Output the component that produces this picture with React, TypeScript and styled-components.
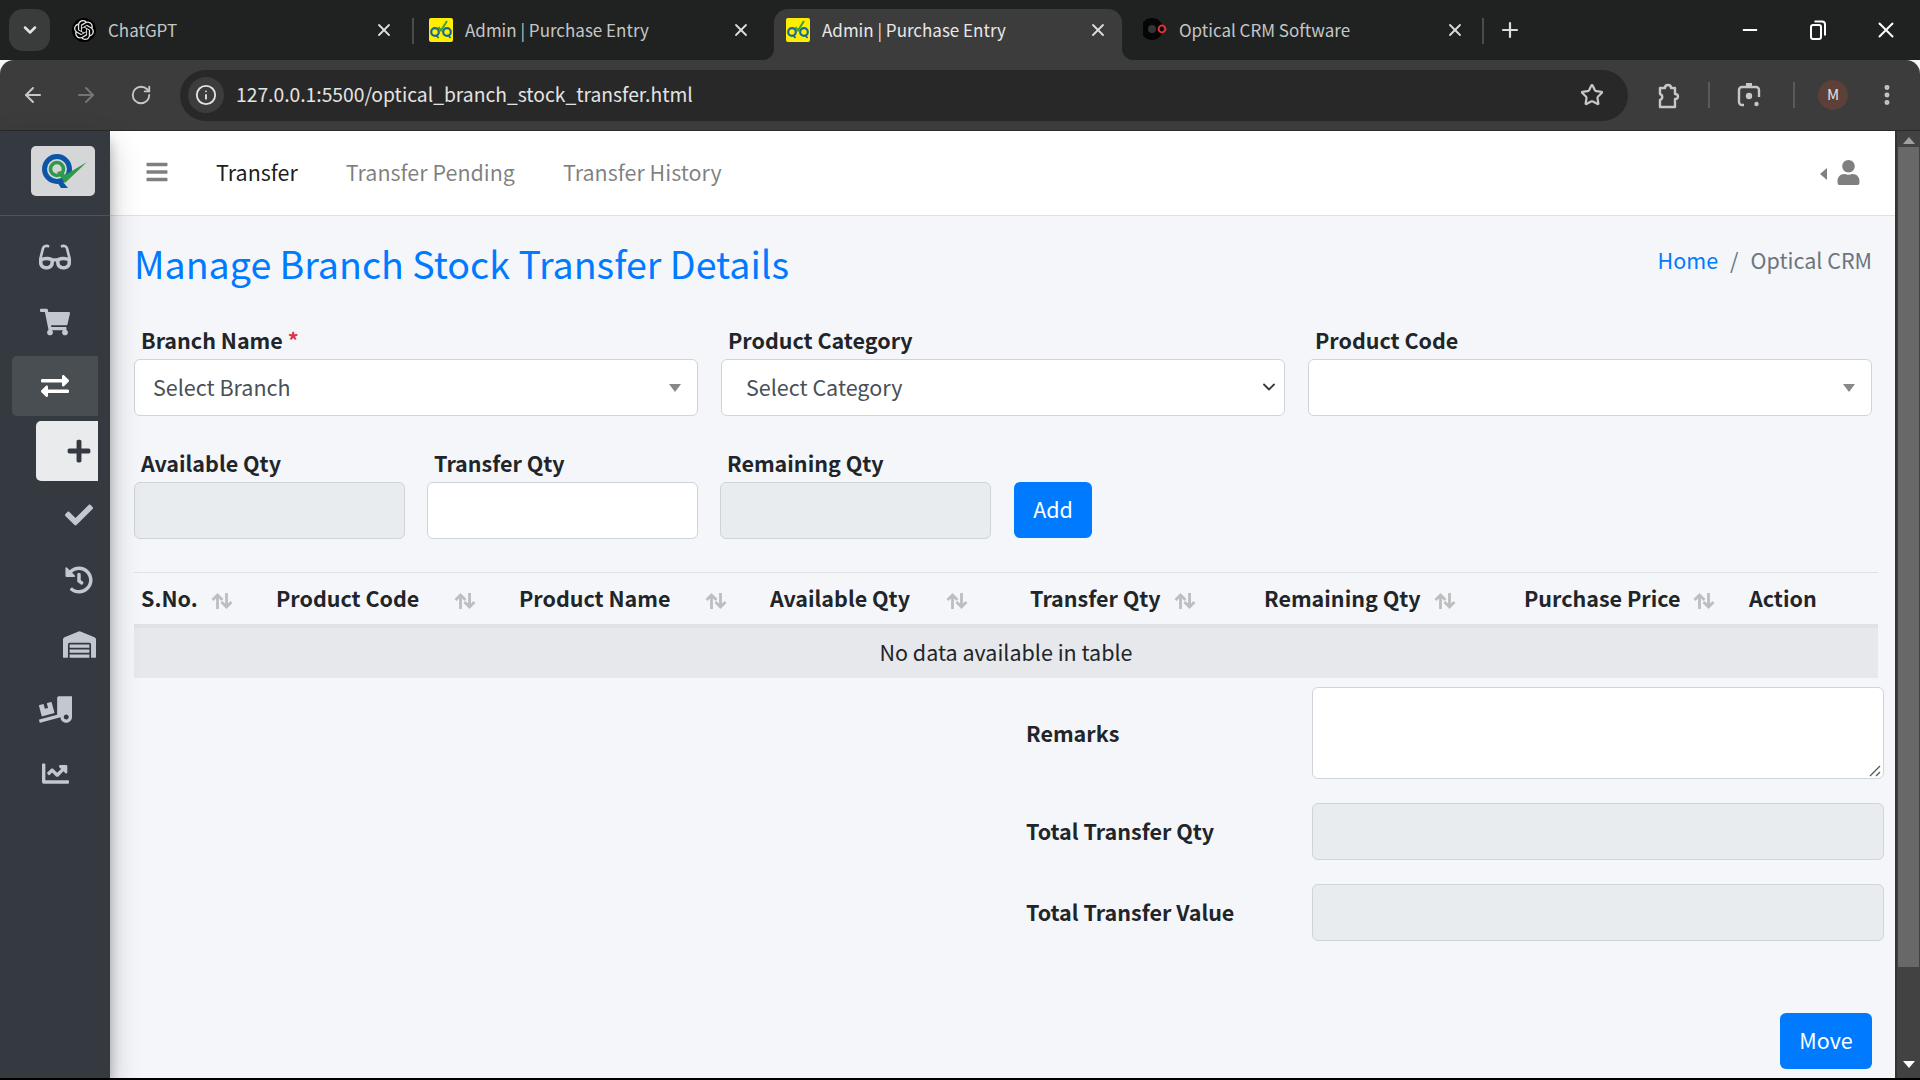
import React from "react";
import styled, { createGlobalStyle } from "styled-components";
import {
  FaGlasses, FaShoppingCart, FaExchangeAlt, FaPlus, FaCheck, FaHistory,
  FaWarehouse, FaTruckLoading, FaChartLine, FaBars, FaUser,
} from "react-icons/fa";
import { SiOpenai } from "react-icons/si";
import { LuChevronDown, LuArrowLeft, LuArrowRight, LuRotateCw, LuInfo, LuStar, LuX, LuPlus, LuMinus, LuEllipsisVertical } from "react-icons/lu";

const FONT = `"Noto Sans CJK SC", "Source Sans Pro", "Noto Sans", sans-serif`;
const TEXT = "21.5px";

const Global = createGlobalStyle`
  html, body { margin: 0; padding: 0; height: 1080px; overflow: hidden; background: #000; }
  * { box-sizing: border-box; }
  #root { height: 1080px; font-family: ${FONT}; }
`;

const Screen = styled.div`
  width: 1920px; height: 1078px; display: flex; flex-direction: column; overflow: hidden; background: #f4f6f9;
`;

/* browser chrome */
const TabStrip = styled.div`
  height: 60px; background: #202222; display: flex; align-items: flex-end; padding-left: 9px; flex: none;
`;
const TabSearch = styled.div`
  width: 41px; height: 42px; margin-bottom: 9px; border-radius: 14px; background: #3a3c3c; color: #e3e3e3;
  display: flex; align-items: center; justify-content: center; margin-right: 5px;
`;
const Tab = styled.div<{ $active?: boolean; $w: number; $pl: number; $pr: number }>`
  position: relative; width: ${p => p.$w}px; height: 51px; display: flex; align-items: center;
  padding: 0 ${p => p.$pr}px 9px ${p => p.$pl}px; gap: 12px;
  color: ${p => (p.$active ? "#e8e8e8" : "#c4c7c5")};
  background: ${p => (p.$active ? "#3c3c3c" : "transparent")};
  border-radius: ${p => (p.$active ? "14px 14px 0 0" : "0")};
  ${p => p.$active && `
    &::before, &::after { content: ""; position: absolute; bottom: 0; width: 12px; height: 12px; }
    &::before { left: -12px; background: radial-gradient(circle at 0 0, #202222 12px, #3c3c3c 12.5px); }
    &::after { right: -12px; background: radial-gradient(circle at 100% 0, #202222 12px, #3c3c3c 12.5px); }
  `}
`;
const TabTitle = styled.span`
  flex: 1; font-size: 17px; line-height: 24px; white-space: nowrap;
`;
const TabSep = styled.div`
  width: 2px; height: 26px; background: #4a4c4c; margin-bottom: 16px; flex: none;
`;
const Favicon = styled.span<{ $bg: string; $round?: boolean }>`
  width: 24px; height: 24px; flex: none; background: ${p => p.$bg}; display: flex; align-items: center; justify-content: center;
  border-radius: ${p => (p.$round ? "50%" : "2px")}; overflow: hidden;
`;
const CloseBtn = styled.span`
  display: flex; color: #dcdcdc; flex: none;
`;
const NewTab = styled.span`
  display: flex; color: #dcdcdc; margin: 0 0 18px 14px;
`;
const WinControls = styled.div`
  margin-left: auto; display: flex; align-items: center; color: #fff; margin-bottom: 17px;
`;
const WinBtn = styled.span`
  width: 68px; display: flex; justify-content: center; align-items: center;
`;
const Toolbar = styled.div`
  height: 70px; background: #3c3c3c; border-radius: 14px 14px 0 0; display: flex; align-items: center; flex: none; padding-left: 21px;
  color: #c7c7c7;
`;
const NavBtn = styled.span<{ $dim?: boolean; $w: number }>`
  width: ${p => p.$w}px; flex: none; display: flex; justify-content: flex-start; color: ${p => (p.$dim ? "#757575" : "#c7c7c7")};
`;
const Omni = styled.div`
  width: 1448px; height: 51px; background: #282828; border-radius: 26px; display: flex; align-items: center; padding: 0 24px 0 8px; flex: none;
`;
const InfoChip = styled.span`
  width: 36px; height: 36px; border-radius: 50%; background: #3c3c3c; color: #e3e3e3; display: flex; align-items: center; justify-content: center; margin-right: 12px;
`;
const Url = styled.span`
  font-size: 19.3px; line-height: 28px; padding-bottom: 3px; color: #e3e3e3; flex: 1; white-space: nowrap;
`;
const ToolGroup = styled.div`
  display: flex; align-items: center; margin-left: 22px; flex: none;
`;
const ToolIcon = styled.span<{ $w: number; $ml?: number }>`
  width: ${p => p.$w}px; margin-left: ${p => p.$ml ?? 0}px; flex: none; display: flex; justify-content: center; align-items: center; color: #c7c7c7;
`;
const ToolSep = styled.span<{ $l: number; $r: number }>`
  width: 2px; height: 26px; background: #5a5a5a; margin: 0 ${p => p.$r}px 0 ${p => p.$l}px; flex: none;
`;
const Avatar = styled.span`
  width: 30px; height: 30px; border-radius: 50%; background: #5d4037; color: #e3e3e3; font-size: 15px; line-height: 28px; text-align: center; flex: none;
`;

/* page */
const Page = styled.div`
  flex: 1; min-height: 0; display: flex; border-top: 1px solid #2a2a2a;
`;
const Sidebar = styled.aside`
  width: 110px; flex: none; background: #343a40; position: relative; z-index: 2;
  box-shadow: 0 14px 28px rgba(0,0,0,.25), 0 10px 10px rgba(0,0,0,.22);
`;
const Brand = styled.div`
  height: 85px; border-bottom: 1px solid #4b545c; padding: 15px 0 0 31px;
`;
const BrandLogo = styled.div`
  width: 64px; height: 50px; background: #d5d6d8; border-radius: 5px; display: flex; align-items: center; justify-content: center; padding-left: 4px;
`;
const Menu = styled.nav`
  padding: 11px 12px 0; display: flex; flex-direction: column;
`;
const MenuItem = styled.div<{ $active?: boolean; $sub?: boolean; $white?: boolean }>`
  height: 60px; margin-bottom: 4.6px; flex: none;
  margin-left: ${p => (p.$white ? 24 : 0)}px;
  width: ${p => (p.$white ? 62 : 86)}px;
  padding-left: ${p => (p.$white ? 24 : p.$sub ? 48 : 0)}px;
  display: flex; align-items: center; justify-content: center;
  color: ${p => (p.$active ? "#fff" : p.$white ? "#343a40" : "#c2c7d0")};
  background: ${p => (p.$active ? "#494e53" : p.$white ? "#e9ebec" : "transparent")};
  border-radius: 5px 0 0 5px;
`;

const Main = styled.div`
  flex: 1; min-width: 0; display: flex; flex-direction: column;
`;
const TopNav = styled.header`
  height: 85px; background: #fff; border-bottom: 1px solid #dee2e6; display: flex; align-items: center; padding: 0 34px 2px 35px; flex: none;
`;
const Burger = styled.span`
  display: flex; color: rgba(0,0,0,.5); margin-right: 47px; font-size: 24px;
`;
const NavLink = styled.a<{ $on?: boolean }>`
  font-size: ${TEXT}; line-height: 36px; margin-right: 48px; color: ${p => (p.$on ? "rgba(0,0,0,.9)" : "rgba(0,0,0,.5)")}; white-space: nowrap;
`;
const UserMenu = styled.div`
  margin-left: auto; display: flex; align-items: center; gap: 9px; color: rgba(0,0,0,.5); font-size: 25px;
`;
const Caret = styled.span`
  width: 0; height: 0; border: 6.5px solid transparent; border-right: 7px solid rgba(0,0,0,.5); border-left: 0; margin-top: 3px;
`;
const Content = styled.div`
  flex: 1; min-height: 0; padding: 0 17px 0 24px;
`;
const TitleRow = styled.div`
  display: flex; justify-content: space-between; height: 107px; padding: 22px 6px 0 0;
`;
const Title = styled.h1`
  margin: 0; font-weight: 400; font-size: 37.6px; line-height: 50px; color: #007bff; white-space: nowrap;
`;
const Crumbs = styled.div`
  font-size: ${TEXT}; line-height: 36px; display: flex; gap: 12px; color: #6c757d; margin-top: 4px;
`;
const CrumbLink = styled.a`
  color: #007bff;
`;
const FieldRow = styled.div`
  display: grid; grid-template-columns: 564px 564px 1fr; gap: 23px; margin-right: 6px;
`;
const Field = styled.div`
  display: flex; flex-direction: column;
`;
const AddCell = styled(Field)`
  padding-left: 1px;
`;
const Label = styled.label`
  font-size: ${TEXT}; height: 36px; line-height: 34px; font-weight: 700; color: #212529; padding-left: 7px; display: block; white-space: nowrap;
`;
const Star = styled.span`
  color: #dc3545;
`;
const Control = styled.div<{ $off?: boolean; $pl?: number; $pr?: number }>`
  height: 57px; border: 1px solid #ced4da; border-radius: 6px; background: ${p => (p.$off ? "#e9ecef" : "#fff")};
  display: flex; align-items: center; justify-content: space-between;
  font-size: ${TEXT}; color: #495057; padding: 0 ${p => p.$pr ?? 16}px 2px ${p => p.$pl ?? 18}px;
`;
const Tri = styled.span`
  width: 0; height: 0; border-left: 6.5px solid transparent; border-right: 6.5px solid transparent; border-top: 8px solid #888; margin-top: 2px;
`;
const SecondRow = styled.div`
  margin-top: 30px; display: grid; grid-template-columns: 271px 271px 271px 79px; gap: 22px;
`;
const PrimaryBtn = styled.button`
  height: 56px; border: 0; border-radius: 6px; background: #007bff; color: #fff; font: 400 ${TEXT}/32px ${FONT}; padding: 0 0 2px;
`;
const Divider = styled.div`
  height: 1px; background: #dee2e6; margin-top: 33px;
`;
const TableHead = styled.div`
  display: grid; grid-template-columns: 135px 243px 251px 260px 234px 260px 225px 136px; height: 55px; border-bottom: 4px solid #dee2e6;
`;
const Th = styled.div<{ $pr: number }>`
  display: flex; align-items: center; justify-content: space-between; padding: 0 ${p => p.$pr}px 3px 7px;
  font-size: ${TEXT}; font-weight: 700; color: #212529; white-space: nowrap;
`;
const SortIcon = styled.svg`
  margin-top: 7px; flex: none;
`;
const EmptyRow = styled.div`
  height: 50px; background: #e7e8ec; display: flex; align-items: center; justify-content: center; font-size: ${TEXT}; color: #212529; padding-bottom: 3px;
`;
const Totals = styled.div`
  margin-top: 9px; margin-right: -6px; display: grid; grid-template-columns: 1fr 572px; row-gap: 24px;
`;
const TotalLabel = styled.div`
  font-size: ${TEXT}; font-weight: 700; color: #212529; padding: 0 0 2px 892px; display: flex; align-items: center; white-space: nowrap;
`;
const TextArea = styled.div`
  height: 92px; border: 1px solid #ced4da; border-radius: 6px; background: #fff; position: relative;
`;
const Grip = styled.svg`
  position: absolute; right: 1px; bottom: 1px;
`;
const MoveRow = styled.div`
  display: flex; justify-content: flex-end; margin-top: 72px; margin-right: 6px;
`;
const MoveBtn = styled(PrimaryBtn)`
  width: 92px;
`;
const Scrollbar = styled.div`
  width: 25px; flex: none; background: #424242; display: flex; flex-direction: column; align-items: center;
  border-left: 2px solid #333;
`;
const ScrollArrow = styled.span<{ $up?: boolean; $c: string }>`
  width: 0; height: 0; border-left: 6px solid transparent; border-right: 6px solid transparent; flex: none;
  ${p => (p.$up ? `border-bottom: 7px solid ${p.$c}; margin: 6px 0 3px;` : `border-top: 7px solid ${p.$c}; margin: 0 0 10px;`)}
`;
const ScrollThumb = styled.div`
  width: 21px; height: 820px; background: #686868; margin-bottom: auto;
`;

const Sort = () => (
  <SortIcon width="22" height="16" viewBox="0 0 22 16" fill="none" stroke="#bcbec0" strokeWidth="2.8">
    <path d="M6.5 16V2M1.5 7 6.5 2l5 5" />
    <path d="M15.5 0v14M10.5 9l5 5 5-5" />
  </SortIcon>
);
const QMark = () => (
  <svg width="46" height="36" viewBox="0 0 46 36" fill="none">
    <circle cx="15" cy="16" r="12.5" stroke="#0c56a6" strokeWidth="5" />
    <path d="M15 29h6l5 6h-7z" fill="#0c56a6" />
    <circle cx="15" cy="16" r="6.5" stroke="#2f9a4a" strokeWidth="3.6" />
    <path d="M15 19l5-1 3 4L45 9 23 30z" fill="#2f9a4a" />
  </svg>
);
const QFav = () => (
  <svg width="24" height="24" viewBox="0 0 24 24" fill="none">
    <circle cx="6" cy="14" r="3.8" stroke="#14689e" strokeWidth="2.2" />
    <circle cx="18" cy="14" r="3.8" stroke="#14689e" strokeWidth="2.2" />
    <path d="M7.5 17.5l2 2.5M19.5 17.5l2 2.5" stroke="#14689e" strokeWidth="1.8" />
    <path d="M9.5 9l2.5 3.5L18 3" stroke="#3f9e3c" strokeWidth="2" />
  </svg>
);
const Restore = () => (
  <svg width="16" height="20" viewBox="0 0 16 20" fill="none" stroke="#fff" strokeWidth="2">
    <rect x="1" y="5" width="10" height="14" rx="2" />
    <path d="M4.5 1.5H12a3 3 0 0 1 3 3v11" />
  </svg>
);
const PuzzleIcon = () => (
  <svg width="24" height="28" viewBox="0 0 24 28" fill="none" stroke="#c7c7c7" strokeWidth="2.4" strokeLinejoin="round">
    <path d="M3 7h5c0-4 6-4 6 0h4v6c4 0 4 5 0 5v8H3v-7c3-1 3-5 0-6z" />
  </svg>
);
const CamIcon = () => (
  <svg width="24" height="26" viewBox="0 0 24 26" fill="none" stroke="#c7c7c7" strokeWidth="2.4">
    <path d="M7 23H5a3 3 0 0 1-3-3V8a3 3 0 0 1 3-3h14a3 3 0 0 1 3 3v7" />
    <rect x="9" y="1" width="6" height="3" fill="#c7c7c7" stroke="none" />
    <circle cx="12" cy="14" r="3.2" fill="#c7c7c7" stroke="none" />
    <circle cx="19.5" cy="22" r="2.2" fill="#c7c7c7" stroke="none" />
  </svg>
);
const OptFav = () => (
  <svg width="24" height="24" viewBox="0 0 24 24">
    <circle cx="9" cy="11" r="11" fill="#050505" />
    <circle cx="9" cy="11" r="4" fill="#333" />
    <circle cx="19" cy="11" r="3.4" fill="none" stroke="#e03131" strokeWidth="2" />
  </svg>
);

const heads: [string, number][] = [
  ["S.No.", 36], ["Product Code", 36], ["Product Name", 36], ["Available Qty", 55],
  ["Transfer Qty", 61], ["Remaining Qty", 61], ["Purchase Price", 27], ["Action", 7],
];

const X = () => <LuX size={20} strokeWidth={2.2} />;

export default function App() {
  return (
    <Screen>
      <Global />
      <TabStrip>
        <TabSearch><LuChevronDown size={20} strokeWidth={3} /></TabSearch>
        <Tab $w={357} $pl={17} $pr={18}>
          <Favicon $bg="#000" $round><SiOpenai size={20} color="#e5e5e5" /></Favicon>
          <TabTitle>ChatGPT</TabTitle>
          <CloseBtn><X /></CloseBtn>
        </Tab>
        <TabSep />
        <Tab $w={360} $pl={15} $pr={23}>
          <Favicon $bg="#ffee00"><QFav /></Favicon>
          <TabTitle>Admin | Purchase Entry</TabTitle>
          <CloseBtn><X /></CloseBtn>
        </Tab>
        <Tab $active $w={348} $pl={12} $pr={14}>
          <Favicon $bg="#ffee00"><QFav /></Favicon>
          <TabTitle>Admin | Purchase Entry</TabTitle>
          <CloseBtn><X /></CloseBtn>
        </Tab>
        <Tab $w={360} $pl={21} $pr={17}>
          <Favicon $bg="transparent"><OptFav /></Favicon>
          <TabTitle>Optical CRM Software</TabTitle>
          <CloseBtn><X /></CloseBtn>
        </Tab>
        <TabSep />
        <NewTab><LuPlus size={24} strokeWidth={2.2} /></NewTab>
        <WinControls>
          <WinBtn><LuMinus size={22} strokeWidth={2} /></WinBtn>
          <WinBtn><Restore /></WinBtn>
          <WinBtn><LuX size={26} strokeWidth={1.8} /></WinBtn>
        </WinControls>
      </TabStrip>
      <Toolbar>
        <NavBtn $w={53}><LuArrowLeft size={24} /></NavBtn>
        <NavBtn $dim $w={56}><LuArrowRight size={24} /></NavBtn>
        <NavBtn $w={50}><LuRotateCw size={22} /></NavBtn>
        <Omni>
          <InfoChip><LuInfo size={22} /></InfoChip>
          <Url>127.0.0.1:5500/optical_branch_stock_transfer.html</Url>
          <LuStar size={24} color="#c7c7c7" strokeWidth={2.2} />
        </Omni>
        <ToolGroup>
          <ToolIcon $w={38}><PuzzleIcon /></ToolIcon>
          <ToolSep $l={20} $r={20} />
          <ToolIcon $w={38}><CamIcon /></ToolIcon>
          <ToolSep $l={25} $r={23} />
          <ToolIcon $w={30}><Avatar>M</Avatar></ToolIcon>
          <ToolIcon $w={30} $ml={24}><LuEllipsisVertical size={26} strokeWidth={2.6} /></ToolIcon>
        </ToolGroup>
      </Toolbar>
      <Page>
        <Sidebar>
          <Brand><BrandLogo><QMark /></BrandLogo></Brand>
          <Menu>
            <MenuItem><FaGlasses size={32} /></MenuItem>
            <MenuItem><FaShoppingCart size={30} /></MenuItem>
            <MenuItem $active><FaExchangeAlt size={28} /></MenuItem>
            <MenuItem $white><FaPlus size={26} /></MenuItem>
            <MenuItem $sub><FaCheck size={28} /></MenuItem>
            <MenuItem $sub><FaHistory size={28} /></MenuItem>
            <MenuItem $sub><FaWarehouse size={33} /></MenuItem>
            <MenuItem><FaTruckLoading size={33} /></MenuItem>
            <MenuItem><FaChartLine size={27} /></MenuItem>
          </Menu>
        </Sidebar>
        <Main>
          <TopNav>
            <Burger><FaBars /></Burger>
            <NavLink $on>Transfer</NavLink>
            <NavLink>Transfer Pending</NavLink>
            <NavLink>Transfer History</NavLink>
            <UserMenu><Caret /><FaUser /></UserMenu>
          </TopNav>
          <Content>
            <TitleRow>
              <Title>Manage Branch Stock Transfer Details</Title>
              <Crumbs><CrumbLink>Home</CrumbLink><span>/</span><span>Optical CRM</span></Crumbs>
            </TitleRow>
            <FieldRow>
              <Field>
                <Label>Branch Name <Star>*</Star></Label>
                <Control>Select Branch<Tri /></Control>
              </Field>
              <Field>
                <Label>Product Category</Label>
                <Control $pl={24} $pr={5}>Select Category<LuChevronDown size={20} strokeWidth={2.2} color="#343a40" /></Control>
              </Field>
              <Field>
                <Label>Product Code</Label>
                <Control><span /><Tri /></Control>
              </Field>
            </FieldRow>
            <SecondRow>
              <Field><Label>Available Qty</Label><Control $off /></Field>
              <Field><Label>Transfer Qty</Label><Control /></Field>
              <Field><Label>Remaining Qty</Label><Control $off /></Field>
              <AddCell><Label>&nbsp;</Label><PrimaryBtn>Add</PrimaryBtn></AddCell>
            </SecondRow>
            <Divider />
            <TableHead>
              {heads.map(([h, pr]) => (
                <Th key={h} $pr={pr}>{h}{h !== "Action" && <Sort />}</Th>
              ))}
            </TableHead>
            <EmptyRow>No data available in table</EmptyRow>
            <Totals>
              <TotalLabel>Remarks</TotalLabel>
              <TextArea>
                <Grip width="14" height="14" viewBox="0 0 14 14" stroke="#555" strokeWidth="1.3"><path d="M2 13 12 3M8 13l4-4" /></Grip>
              </TextArea>
              <TotalLabel>Total Transfer Qty</TotalLabel>
              <Control $off />
              <TotalLabel>Total Transfer Value</TotalLabel>
              <Control $off />
            </Totals>
            <MoveRow><MoveBtn>Move</MoveBtn></MoveRow>
          </Content>
        </Main>
        <Scrollbar>
          <ScrollArrow $up $c="#a0a0a0" />
          <ScrollThumb />
          <ScrollArrow $c="#fff" />
        </Scrollbar>
      </Page>
    </Screen>
  );
}
